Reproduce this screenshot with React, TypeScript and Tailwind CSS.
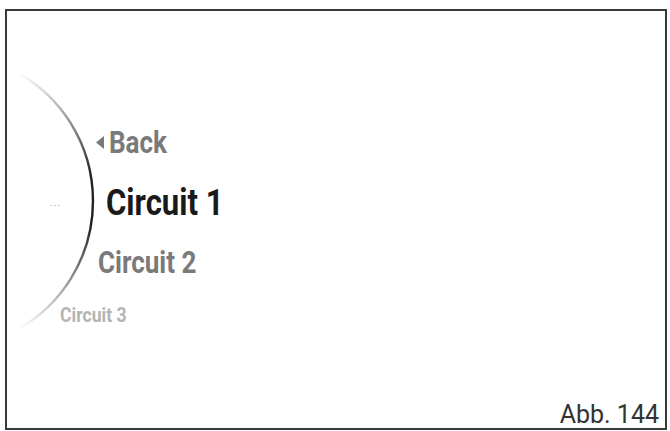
import React from "react";

// circuit picker wheel, one entry highlighted
const items = [
  { label: "Circuit 2", cls: "ml-[91px] mt-[26px] text-[31px] text-[#7a7a7a]" },
  { label: "Circuit 3", cls: "ml-[53px] mt-[27px] text-[21px] text-[#b4b4b4]" },
];

function WheelArc() {
  return (
    <svg className="absolute left-0 top-0" width={120} height={431} viewBox="0 0 120 431" fill="none">
      <defs>
        <linearGradient id="arcFade" x1="0" y1="72" x2="0" y2="330" gradientUnits="userSpaceOnUse">
          <stop offset="0" stopColor="#222" stopOpacity="0" />
          <stop offset="0.4" stopColor="#222" stopOpacity="1" />
          <stop offset="0.6" stopColor="#222" stopOpacity="1" />
          <stop offset="1" stopColor="#222" stopOpacity="0" />
        </linearGradient>
      </defs>
      <path d="M 20 74 A 147 147 0 0 1 20 328" stroke="url(#arcFade)" strokeWidth={2.4} />
    </svg>
  );
}

// Roboto squeezed sideways to get the narrow display face
function Narrow({ children }: { children: React.ReactNode }) {
  return <span className="inline-block origin-left scale-x-[0.84] whitespace-nowrap">{children}</span>;
}

export default function App() {
  return (
    <div className="w-[670px] h-[431px] bg-white pt-[9px] pl-[5px] overflow-hidden" style={{ fontFamily: "Roboto, 'Liberation Sans', sans-serif" }}>
      <div className="relative w-[662px] h-[421px] border-2 border-[#3a3a3a] flex flex-col">
        <div className="absolute -left-[7px] -top-[11px]">
          <WheelArc />
        </div>

        <div className="relative flex flex-col pt-[116px] font-bold leading-none">
          <div className="ml-[89px] flex items-center text-[31px] text-[#7a7a7a]">
            <svg width={8} height={13} viewBox="0 0 8 13" className="mr-[5px]">
              <path d="M8 0 L0 6.5 L8 13 Z" fill="#7a7a7a" />
            </svg>
            <Narrow>Back</Narrow>
          </div>

          <div className="mt-[26px] flex items-center">
            <span className="ml-[43px] w-[56px] text-[10px] font-normal text-[#999] tracking-[1px]">...</span>
            <span className="text-[37px] text-[#1a1a1a]">
              <Narrow>Circuit 1</Narrow>
            </span>
          </div>

          {items.map((it) => (
            <div key={it.label} className={it.cls}>
              <Narrow>{it.label}</Narrow>
            </div>
          ))}
        </div>

        <div className="mt-auto flex justify-end pr-[6px] pb-[1px]">
          <span className="text-[25px] leading-none text-[#333]">Abb. 144</span>
        </div>
      </div>
    </div>
  );
}
